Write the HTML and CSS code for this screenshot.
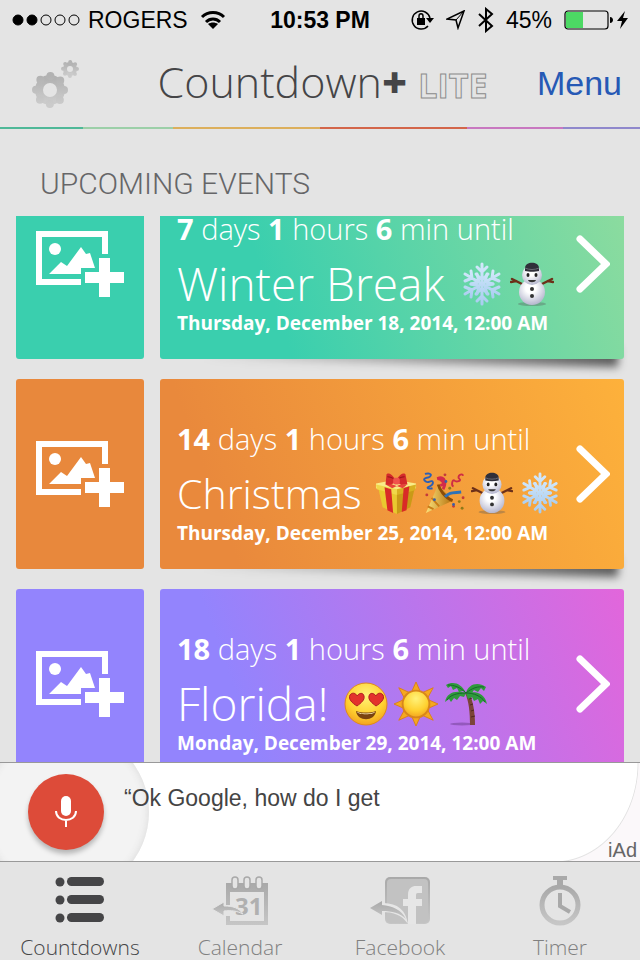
FILE: index.html
```html
<!DOCTYPE html>
<html lang="en">
<head>
    <meta charset="UTF-8">
    <meta name="viewport" content="width=device-width, initial-scale=1.0">
    <title>Countdown+ Lite</title>
    <link rel="stylesheet" href="styles.css">
</head>
<body>
    <!-- Shared drawings -->
    <svg class="sprite" aria-hidden="true">
        <defs>
            <linearGradient id="metal" x1="0" y1="0" x2="0" y2="1">
                <stop offset="0" stop-color="#a9a9a9"/>
                <stop offset="1" stop-color="#c6c6c6"/>
            </linearGradient>
            <linearGradient id="gear" x1="0" y1="0" x2="0" y2="1">
                <stop offset="0" stop-color="#b2b2b2"/>
                <stop offset="1" stop-color="#cbcbcb"/>
            </linearGradient>
            <linearGradient id="ice" x1="0" y1="0" x2="0" y2="1">
                <stop offset="0" stop-color="#d3e8fb"/>
                <stop offset="1" stop-color="#a9cdf0"/>
            </linearGradient>
            <radialGradient id="snow" cx="0.45" cy="0.35" r="0.65">
                <stop offset="0.3" stop-color="#ffffff"/>
                <stop offset="1" stop-color="#b5b6ce"/>
            </radialGradient>
            <radialGradient id="yellow" cx="0.5" cy="0.3" r="0.75">
                <stop offset="0" stop-color="#fff27a"/>
                <stop offset="0.6" stop-color="#ffd130"/>
                <stop offset="1" stop-color="#f09a1c"/>
            </radialGradient>
            <linearGradient id="gold" x1="0" y1="0" x2="1" y2="0">
                <stop offset="0" stop-color="#fbe27a"/>
                <stop offset="1" stop-color="#b5700c"/>
            </linearGradient>
        </defs>

        <symbol id="add-photo" viewBox="0 0 88 66">
            <path fill="#fff" d="M0 0h72v23h-6V6H6v42h39v6H0z"/>
            <circle fill="#fff" cx="19" cy="18" r="6"/>
            <path fill="#fff" d="M13 43l12-12 6 4 14-19 5 7 4-1 5 15H45v6z"/>
            <path fill="#fff" d="M63 27h11v14h14v11H74v14H63V52H49V41h14z"/>
        </symbol>

        <symbol id="chevron" viewBox="0 0 34 58">
            <path d="M4 4l26 25L4 54" fill="none" stroke="#fff" stroke-width="7" stroke-linecap="round"/>
        </symbol>

        <symbol id="snowflake" viewBox="0 0 44 44">
            <g fill="none" stroke="url(#ice)" stroke-width="3" stroke-linecap="round" stroke-linejoin="round">
                <path d="M22 2v40M17 5l5 5 5-5M17 39l5-5 5 5M16 12l6 6 6-6M16 32l6-6 6 6"/>
                <path d="M5 12l34 20M5 19l7-3-1-7M39 25l-7 3 1 7M11 22l8-2-2-8M33 22l-8 2 2 8"/>
                <path d="M39 12L5 32M39 19l-7-3 1-7M5 25l7 3-1 7M33 22l-8-2 2-8M11 22l8 2-2 8"/>
            </g>
        </symbol>

        <symbol id="snowman" viewBox="0 0 44 44">
            <ellipse cx="22" cy="42" rx="14" ry="2" fill="#555" opacity="0.35"/>
            <path d="M2 17l12 6M42 17l-12 6M1 20l5-1M43 20l-5-1" stroke="#6c3019" stroke-width="2.5" stroke-linecap="round"/>
            <circle cx="22" cy="30" r="13" fill="url(#snow)"/>
            <circle cx="22" cy="13" r="10" fill="url(#snow)"/>
            <path d="M15 6c0-7 14-7 14 0v3c-4 1-10 1-14 0z" fill="#30303a"/>
            <path d="M15 6c4 2 10 2 14 0" fill="none" stroke="#6b6b75"/>
            <ellipse cx="18" cy="13" rx="1.5" ry="2" fill="#222"/>
            <ellipse cx="26" cy="13" rx="1.5" ry="2" fill="#222"/>
            <path d="M18 18h8c-1 3-7 3-8 0z" fill="#333"/>
            <circle cx="22" cy="27" r="2" fill="#333"/>
            <circle cx="22" cy="34" r="2" fill="#333"/>
        </symbol>

        <symbol id="gift" viewBox="0 0 44 44">
            <path d="M3 15l20 4v25L8 37z" fill="#e9c92f"/>
            <path d="M23 19l19-4-5 22-14 7z" fill="#c99a17"/>
            <path d="M1 12l20-4 22 4v5l-20 6L1 17z" fill="#f9ec88"/>
            <path d="M1 13l22 5v6L2 18z" fill="#f0d84a"/>
            <path d="M23 18l20-5-1 6-19 5z" fill="#d8b021"/>
            <path d="M10 16l7 2 2 25-6-3zM30 17l6-2-3 25-5 2z" fill="#d92b27"/>
            <path d="M11 13l16-4 6 1-15 7zM33 14l-15-4-5 1 16 6z" fill="#e8453a"/>
            <path d="M22 9C17 0 12 1 12 3l-1 10c4 1 9 0 11-4zM22 9c5-9 10-8 10-6l2 10c-5 1-10 0-12-4z" fill="#d42a2b"/>
            <path d="M13 5c4 0 7 2 9 5M31 5c-4 0-7 2-9 5" stroke="#8f1018" fill="none"/>
            <rect x="19" y="6" width="7" height="7" rx="2" fill="#f0534c"/>
        </symbol>

        <symbol id="party" viewBox="0 0 44 44">
            <path d="M16 13l15 17L3 43z" fill="url(#gold)"/>
            <path d="M16 13c1 5 7 14 15 17" fill="none" stroke="#8b4c08" stroke-width="3"/>
            <path d="M5 36l6 3M9 27l8 9" stroke="#c77d17" stroke-width="2"/>
            <path d="M18 14c8-1 0-7-3-7 9-4 9 6 6 11" fill="none" stroke="#d32b4a" stroke-width="3"/>
            <path d="M23 26c5-5 8-4 17-5" fill="none" stroke="#2f72b8" stroke-width="3"/>
            <path d="M2 2c8-2 8 3 2 4s-1 6 3 4 5 3 0 5 0 3 3 2" fill="none" stroke="#2c5fb5" stroke-width="2"/>
            <path d="M42 4c-1-4-7 1-4 3s-3 4-5 2-4 5-1 6" fill="none" stroke="#cf2d45" stroke-width="2"/>
            <g fill="#c43b3b"><circle cx="4" cy="24" r="1.5"/><circle cx="32" cy="36" r="1.5"/><circle cx="42" cy="27" r="1.5"/><circle cx="23" cy="3" r="1.5"/></g>
            <g fill="#3a5fa8"><circle cx="24" cy="10" r="1.5"/><circle cx="32" cy="34" r="1.5"/><circle cx="12" cy="29" r="1.5"/></g>
            <g fill="#8e7a18"><circle cx="38" cy="31" r="1.5"/><circle cx="41" cy="38" r="1.5"/><circle cx="28" cy="17" r="1.5"/></g>
        </symbol>

        <symbol id="love" viewBox="0 0 44 44">
            <circle cx="22" cy="22" r="21" fill="url(#yellow)" stroke="#e08a1c"/>
            <path d="M13 24C8 21 4 17 6 13c2-3 6-2 7 1 2-3 6-4 7 0 1 4-3 7-7 10z" fill="#e3322c" stroke="#b02020"/>
            <path d="M32 24c-4-3-8-6-7-10 1-4 5-3 7 0 1-3 5-4 7-1 2 4-2 8-7 11z" fill="#e3322c" stroke="#b02020"/>
            <path d="M12 29c6 2 14 2 20 0-1 11-19 11-20 0z" fill="#7a4310"/>
            <path d="M13 30c6 2 12 2 18 0-1 3-17 3-18 0z" fill="#fff0c0"/>
        </symbol>

        <symbol id="sun" viewBox="0 0 46 46">
            <path d="M23 0l4 9h-8zM23 46l4-9h-8zM0 23l9-4v8zM46 23l-9-4v8zM5 6l11 5-5 6zM41 6l-11 5 5 6zM5 40l11-5-5-6zM41 40l-11-5 5-6z" fill="#f5a81f" stroke="#d9801a"/>
            <circle cx="23" cy="23" r="14" fill="url(#yellow)" stroke="#d9861a" stroke-width="2"/>
        </symbol>

        <symbol id="palm" viewBox="0 0 44 44">
            <ellipse cx="18" cy="42" rx="12" ry="1.5" fill="#5b2f78" opacity="0.4"/>
            <path d="M21 11c4 8 5 20 5 32h5c0-13-2-24-6-33z" fill="#7b4438"/>
            <path d="M25 17l3-1M26 23l3-1M27 29l3-1M27 35l4-1" stroke="#4f2722" stroke-width="1"/>
            <path d="M22 11C17 1 9-1 2 3l2 3 3-2 2 4 4-2 2 4 4-1zM22 11c2-9 12-12 20-6l-2 4-3-3-3 4-4-2-3 4zM22 11C12 8 3 10 1 20l4-3 2 3 3-4 3 2 3-4 4 1zM22 11c10-3 19 1 21 11l-4-3-3 3-2-5-4 2-2-4-4 2z" fill="#2f9a3c"/>
            <path d="M22 11C16 5 10 3 4 3M22 11c6-5 12-7 18-6M22 11C13 11 6 13 3 18M22 11c8 0 15 3 19 9" fill="none" stroke="#17692b"/>
        </symbol>
    </svg>

    <!-- Status bar -->
    <div class="status-bar">
        <div class="status-left">
            <svg width="68" height="12" viewBox="0 0 68 12">
                <g stroke="#000"><circle cx="6" cy="6" r="5"/><circle cx="20" cy="6" r="5"/></g>
                <g stroke="#000" fill="none"><circle cx="34" cy="6" r="5"/><circle cx="48" cy="6" r="5"/><circle cx="62" cy="6" r="5"/></g>
            </svg>
            <span>ROGERS</span>
            <svg class="wifi" width="26" height="20" viewBox="0 0 26 20">
                <g fill="none" stroke="#000" stroke-width="3">
                    <path d="M2 7c6-6 16-6 22 0"/><path d="M6 12c4-4 10-4 14 0"/>
                </g>
                <path d="M8 14c3-2 7-2 10 0l-5 5z"/>
            </svg>
        </div>
        <strong class="clock">10:53 PM</strong>
        <div class="status-right">
            <svg width="24" height="22" viewBox="0 0 24 22">
                <path d="M18 17A9 9 0 1 1 20 9" fill="none" stroke="#000" stroke-width="1.5"/>
                <path d="M16 9h8l-4 5z"/>
                <rect x="7" y="9" width="8" height="7"/>
                <path d="M9 9V7c0-3 4-3 4 0v2" fill="none" stroke="#000" stroke-width="1.5"/>
            </svg>
            <svg width="20" height="20" viewBox="0 0 20 20">
                <path d="M18 1L1 9l9 1 2 8z" fill="none" stroke="#000" stroke-width="1.5"/>
                <path d="M18 1l-8 9"  stroke="#000"/>
            </svg>
            <svg width="16" height="26" viewBox="0 0 16 26">
                <path d="M1 7l13 12-6 5V2l6 5L1 19" fill="none" stroke="#000" stroke-width="2"/>
            </svg>
            <span>45%</span>
            <svg width="64" height="20" viewBox="0 0 64 20">
                <rect x="1" y="1" width="43" height="18" rx="3" fill="none" stroke="#000" stroke-width="1.2"/>
                <rect x="2" y="2" width="17" height="16" fill="#4cd964"/>
                <path d="M46 7c4 0 4 6 0 6z"/>
                <path d="M61 1l-8 10h5l-2 8 8-11h-5z"/>
            </svg>
        </div>
    </div>

    <header class="app-header">
        <button class="settings-button" aria-label="Settings">
            <svg width="50" height="50" viewBox="0 0 50 50">
                <g fill="none" stroke="url(#gear)">
                    <circle cx="19" cy="31" r="11" stroke-width="8"/>
                    <circle cx="19" cy="31" r="14" stroke-width="8" stroke-dasharray="0 10.995" stroke-linecap="round"/>
                    <circle cx="39" cy="10" r="5" stroke-width="4"/>
                    <circle cx="39" cy="10" r="7" stroke-width="4" stroke-dasharray="0 5.498" stroke-linecap="round"/>
                </g>
            </svg>
        </button>
        <h1>Countdown<b>+</b> <span class="lite">LITE</span></h1>
        <a class="menu-link" href="#menu">Menu</a>
    </header>
    <div class="rainbow"></div>

    <main>
        <h2>UPCOMING EVENTS</h2>
        <div class="events-window">
            <!-- The list is scrolled down a little -->
            <ul class="events">
                <li class="event event-green">
                    <button class="photo-button" aria-label="Add photo"><svg width="88" height="66"><use href="#add-photo"/></svg></button>
                    <a class="card" href="#winter-break">
                        <span class="details">
                            <span class="remaining"><b>7</b> days <b>1</b> hours <b>6</b> min until</span>
                            <span class="title">Winter Break <svg><use href="#snowflake"/></svg><svg><use href="#snowman"/></svg></span>
                            <span class="date">Thursday, December 18, 2014, 12:00 AM</span>
                        </span>
                        <svg class="chevron" width="34" height="58"><use href="#chevron"/></svg>
                    </a>
                </li>
                <li class="event event-orange">
                    <button class="photo-button" aria-label="Add photo"><svg width="88" height="66"><use href="#add-photo"/></svg></button>
                    <a class="card" href="#christmas">
                        <span class="details">
                            <span class="remaining"><b>14</b> days <b>1</b> hours <b>6</b> min until</span>
                            <span class="title title-small">Christmas <svg><use href="#gift"/></svg><svg><use href="#party"/></svg><svg><use href="#snowman"/></svg><svg><use href="#snowflake"/></svg></span>
                            <span class="date">Thursday, December 25, 2014, 12:00 AM</span>
                        </span>
                        <svg class="chevron" width="34" height="58"><use href="#chevron"/></svg>
                    </a>
                </li>
                <li class="event event-purple">
                    <button class="photo-button" aria-label="Add photo"><svg width="88" height="66"><use href="#add-photo"/></svg></button>
                    <a class="card" href="#florida">
                        <span class="details">
                            <span class="remaining"><b>18</b> days <b>1</b> hours <b>6</b> min until</span>
                            <span class="title">Florida! <svg><use href="#love"/></svg><svg><use href="#sun"/></svg><svg><use href="#palm"/></svg></span>
                            <span class="date">Monday, December 29, 2014, 12:00 AM</span>
                        </span>
                        <svg class="chevron" width="34" height="58"><use href="#chevron"/></svg>
                    </a>
                </li>
            </ul>
        </div>
    </main>

    <!-- Ad banner -->
    <a class="ad" href="#ad">
        <span class="ad-halo">
            <span class="ad-mic">
                <svg width="22" height="32" viewBox="0 0 22 32">
                    <rect x="6" y="0" width="10" height="20" rx="5" fill="#fff"/>
                    <path d="M1 15c0 12 20 12 20 0M11 24v7" fill="none" stroke="#fff" stroke-width="2"/>
                </svg>
            </span>
        </span>
        <span class="ad-text">“Ok Google, how do I get</span>
        <span class="ad-label">iAd</span>
    </a>

    <nav class="tab-bar">
        <a class="tab tab-active" href="#countdowns">
            <svg width="50" height="50" viewBox="0 0 50 50">
                <g fill="#454547">
                    <circle cx="5" cy="6" r="4.5"/><rect x="12" y="1" width="37" height="9" rx="4.5"/>
                    <circle cx="5" cy="24" r="4.5"/><rect x="12" y="19" width="37" height="9" rx="4.5"/>
                    <circle cx="5" cy="42" r="4.5"/><rect x="12" y="37" width="37" height="9" rx="4.5"/>
                </g>
            </svg>
            Countdowns
        </a>
        <a class="tab" href="#calendar">
            <svg width="58" height="50" viewBox="0 0 58 50">
                <path d="M15 7h42v42H15V40h4v5h34V16H19v13h-4z" fill="url(#metal)"/>
                <g fill="#e4e4e4" stroke="#a9a9a9" stroke-width="1.5">
                    <rect x="21" y="1" width="6" height="12" rx="3"/><rect x="33" y="1" width="6" height="12" rx="3"/><rect x="45" y="1" width="6" height="12" rx="3"/>
                </g>
                <text class="calendar-day" x="24" y="39" fill="#b0b0b0">31</text>
                <path d="M1 33l12-7v4c9 0 15 2 19 8-6-3-12-4-19-3v5z" fill="url(#metal)" stroke="#e4e4e4"/>
            </svg>
            Calendar
        </a>
        <a class="tab" href="#facebook">
            <svg width="60" height="50" viewBox="0 0 60 50">
                <rect x="15" y="1" width="45" height="47" rx="5" fill="url(#metal)"/>
                <rect x="17" y="3" width="41" height="44" rx="4" fill="#c2c2c2"/>
                <path d="M38 48V30h-5v-7h5v-4c0-7 4-9 8-9h6v7h-4c-2 0-2 1-2 3v3h6v7h-6v18z" fill="#e6e6e6"/>
                <path d="M11 27c14 0 24 4 27 21-6-9-14-12-27-12z" fill="#e6e6e6"/>
                <path d="M0 32l12-7v4c10 1 19 4 24 14-6-6-14-8-24-8v4z" fill="url(#metal)"/>
            </svg>
            Facebook
        </a>
        <a class="tab" href="#timer">
            <svg width="42" height="50" viewBox="0 0 42 50">
                <path d="M14 0h14v4h-4v5h-6V4h-4z" fill="#a9a9a9"/>
                <circle cx="21" cy="29" r="18" fill="none" stroke="url(#metal)" stroke-width="5"/>
                <path d="M21 17v13l10 6" fill="none" stroke="#a9a9a9" stroke-width="4"/>
            </svg>
            Timer
        </a>
    </nav>
</body>
</html>
```
FILE: styles.css
```css
/* General Reset */
* {
    margin: 0;
    padding: 0;
    box-sizing: border-box;
}

body {
    display: flex;
    flex-direction: column;
    height: 100vh;
    overflow: hidden;
    font-family: "Open Sans", "Noto Sans", sans-serif;
    background-color: #e4e4e4;
    color: #454547;
}

a {
    color: inherit;
    text-decoration: none;
}

button {
    border: none;
    background: none;
    cursor: pointer;
}

svg {
    flex: none;
}

.sprite {
    position: absolute;
    width: 0;
    height: 0;
}

/* Status bar */
.status-bar {
    display: grid;
    grid-template-columns: 1fr auto 1fr;
    align-items: center;
    height: 40px;
    padding: 0 12px;
    font-family: "Liberation Sans", Arial, sans-serif;
    font-size: 23px;
    color: #000;
}

.status-left,
.status-right {
    display: flex;
    align-items: center;
    gap: 8px;
}

.wifi {
    margin-left: 4px;
}

.status-right {
    justify-content: flex-end;
    gap: 12px;
}

/* Header */
.app-header {
    display: grid;
    grid-template-columns: 1fr auto 1fr;
    align-items: center;
    height: 87px;
    padding: 0 18px 0 31px;
}

.settings-button {
    justify-self: start;
    height: 50px;
}

.app-header h1 {
    margin-right: 8px;
    font-size: 43px;
    font-weight: 300;
    line-height: 60px;
}

.app-header h1 b {
    font-weight: 800;
}

.app-header .lite {
    font-size: 34px;
    font-weight: 700;
    color: #e4e4e4;
    -webkit-text-stroke: 1px #8c8c8c;
}

.menu-link {
    justify-self: end;
    font-family: "Liberation Sans", Arial, sans-serif;
    font-size: 34px;
    color: #2659b5;
}

.rainbow {
    height: 2px;
    background: linear-gradient(to right,
        #4fb898 0 13%,
        #9ccfa8 13% 27%,
        #dcaf5c 27% 50%,
        #d3664a 50% 73%,
        #c878c0 73% 88%,
        #8f88cc 88%);
}

/* Events */
main {
    flex: 1;
    min-height: 0;
    display: flex;
    flex-direction: column;
}

main h2 {
    padding: 35px 40px 12px;
    font-family: Roboto, "Liberation Sans", sans-serif;
    font-size: 30px;
    font-weight: 300;
    line-height: 40px;
    color: #666668;
}

.events-window {
    flex: 1;
    min-height: 0;
    overflow: hidden;
}

.events {
    display: flex;
    flex-direction: column;
    gap: 20px;
    margin-top: -47px;
    padding: 0 16px;
    list-style: none;
}

.event {
    display: flex;
    gap: 16px;
    height: 190px;
}

.photo-button {
    display: flex;
    align-items: center;
    justify-content: center;
    width: 128px;
    border-radius: 3px;
}

.card {
    position: relative;
    flex: 1;
    display: flex;
    align-items: center;
    justify-content: space-between;
    padding: 0 14px 0 17px;
    border-radius: 3px;
    color: #fff;
    white-space: nowrap;
}

/* Lifted corner shadow */
.card::after {
    content: "";
    position: absolute;
    z-index: -1;
    right: 6px;
    bottom: -8px;
    width: 90%;
    height: 20px;
    background: linear-gradient(to right, transparent, rgba(0, 0, 0, 0.6));
    filter: blur(4px);
    transform: rotate(1deg);
    transform-origin: right bottom;
}

.event-green .photo-button {
    background-color: #3acfae;
}

.event-green .card {
    background: linear-gradient(70deg, #3acfae 25%, #8fdc9e);
}

.event-orange .photo-button {
    background-color: #e8883c;
}

.event-orange .card {
    background: linear-gradient(70deg, #e9893c 15%, #fdb13b);
}

.event-purple .photo-button {
    background-color: #9384fd;
}

.event-purple .card {
    background: linear-gradient(70deg, #9384fd 20%, #e266db);
}

.details {
    display: flex;
    flex-direction: column;
    padding-top: 22px;
}

.remaining {
    margin-bottom: 12px;
    font-size: 29px;
    font-weight: 300;
    line-height: 30px;
}

.remaining b {
    font-weight: 700;
}

.title {
    height: 54px;
    font-size: 46px;
    font-weight: 300;
    line-height: 54px;
}

.title svg {
    width: 44px;
    height: 44px;
    margin: 0 3px;
    vertical-align: -5px;
}

.title-small {
    font-size: 41px;
}

.title-small svg {
    width: 42px;
    height: 42px;
}

.date {
    font-size: 19px;
    font-weight: 700;
    line-height: 26px;
}

/* Ad banner */
.ad {
    display: flex;
    align-items: center;
    height: 100px;
    overflow: hidden;
    border-top: 1px solid #999;
    border-bottom: 1px solid #999;
    background: radial-gradient(ellipse 84px 99px at calc(100% - 86px) 0, #fff 99%, #e2e2e2 100%, #fbf8fa 101%) right / 86px 100% no-repeat #fff;
    font-family: "Liberation Sans", Arial, sans-serif;
}

.ad-halo {
    flex: none;
    display: flex;
    align-items: center;
    justify-content: center;
    width: 166px;
    height: 166px;
    margin-left: -17px;
    border-radius: 50%;
    background-color: #f3f3f3;
    box-shadow: inset 0 0 8px #d8d8d8;
}

.ad-mic {
    display: flex;
    align-items: center;
    justify-content: center;
    width: 76px;
    height: 76px;
    border-radius: 50%;
    background-color: #dd4b39;
    box-shadow: 0 4px 5px rgba(0, 0, 0, 0.25);
}

.ad-text {
    flex: 1;
    margin: 0 0 28px -25px;
    font-size: 23px;
    color: #444;
}

.ad-label {
    align-self: flex-end;
    padding-right: 3px;
    font-size: 20px;
    line-height: 22px;
    color: #666;
}

/* Tab bar */
.tab-bar {
    display: flex;
    height: 98px;
}

.tab {
    flex: 1;
    display: flex;
    flex-direction: column;
    align-items: center;
    gap: 6px;
    padding-top: 14px;
    font-size: 21px;
    font-weight: 300;
    line-height: 30px;
    color: #808080;
}

.tab-active {
    color: #454547;
}

.calendar-day {
    font-family: "Open Sans", sans-serif;
    font-size: 24px;
    font-weight: 700;
}
```
